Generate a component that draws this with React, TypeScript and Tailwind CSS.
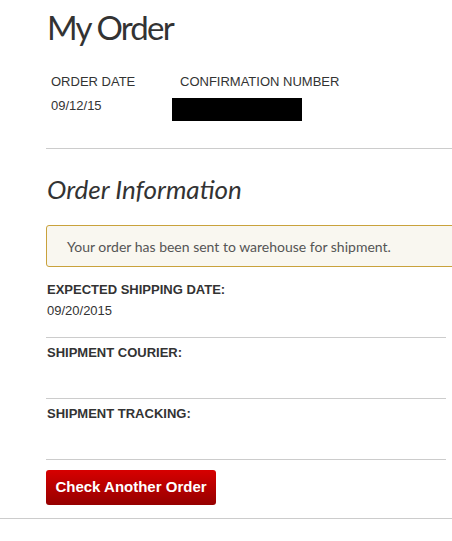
import React from "react";

export default function App() {
  return (
    <div className="w-[452px] h-[541px] bg-white overflow-hidden relative">
      <div className="pl-[46px]">
        <h1 className="font-['Lato',sans-serif] text-[33px] tracking-[-1.8px] leading-[40px] text-[#333] pt-[7px] pl-px">My Order</h1>
        <div className="mt-[27px] pl-[5px] font-['Liberation_Sans',Arial,sans-serif] text-[13px] text-[#333] leading-[15px]">
          <div className="flex">
            <div className="w-[129px]">ORDER DATE</div>
            <div>CONFIRMATION NUMBER</div>
          </div>
          <div className="flex mt-[9px]">
            <div className="w-[121px]">09/12/15</div>
            <div className="w-[130px] h-[23px] bg-black" />
          </div>
        </div>
        <div className="mt-[27px] h-px bg-[#cccccc]" />
        <h2 className="mt-[25px] font-['Lato',sans-serif] italic text-[26px] leading-[30px] text-[#333] pl-px">Order Information</h2>
        <div className="mt-[21px] w-[420px] h-[42px] border border-[#c9a23c] rounded-[3px] bg-[#f9f7f0] flex items-center pl-[20px] font-['Lato',sans-serif] text-[14px] text-[#555]">
          Your order has been sent to warehouse for shipment.
        </div>
        <div className="w-[400px] font-['Liberation_Sans',Arial,sans-serif] text-[13px] text-[#333] leading-[15px]">
          <div className="mt-[15px] pl-px font-bold">EXPECTED SHIPPING DATE:</div>
          <div className="mt-[6px] pl-px">09/20/2015</div>
          <div className="mt-[19px] h-px bg-[#cccccc]" />
          <div className="mt-[7px] pl-px font-bold">SHIPMENT COURIER:</div>
          <div className="h-[38px]" />
          <div className="h-px bg-[#cccccc]" />
          <div className="mt-[7px] pl-px font-bold">SHIPMENT TRACKING:</div>
          <div className="h-[38px]" />
          <div className="h-px bg-[#cccccc]" />
        </div>
        <button className="mt-[10px] w-[170px] h-[35px] rounded-[3px] bg-gradient-to-b from-[#d70000] to-[#960000] text-white font-bold text-[15px] font-['Liberation_Sans',Arial,sans-serif]">
          Check Another Order
        </button>
      </div>
      <div className="mt-[13px] h-px bg-[#cccccc]" />
    </div>
  );
}
